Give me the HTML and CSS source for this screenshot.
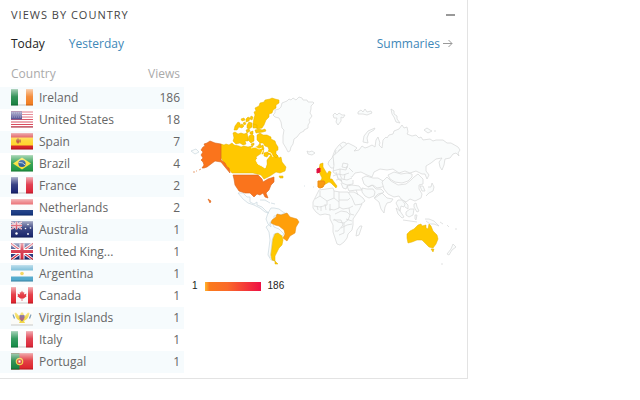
FILE: index.html
```html
<!DOCTYPE html>
<html lang="en">
<head>
    <meta charset="UTF-8">
    <meta name="viewport" content="width=device-width, initial-scale=1.0">
    <title>Views by country</title>
    <link rel="stylesheet" href="styles.css">
</head>
<body>
    <!-- flags, used by the table rows -->
    <svg class="defs" width="0" height="0" aria-hidden="true">
        <defs>
            <linearGradient id="gloss" x1="0" y1="0" x2="0" y2="1">
                <stop offset="0" stop-color="#fff" stop-opacity=".6"/>
                <stop offset=".45" stop-color="#fff" stop-opacity=".15"/>
                <stop offset="1" stop-color="#fff" stop-opacity="0"/>
            </linearGradient>
        </defs>
        <symbol id="shine" viewBox="0 0 22 16"><path fill="url(#gloss)" d="M0 0h22v16H0z"/><path fill="none" stroke="#000" stroke-opacity=".2" d="M0 15.5h22"/></symbol>
        <symbol id="ie" viewBox="0 0 22 16"><path fill="#fafafa" d="M0 0h22v16H0z"/><path fill="#14803f" d="M0 0h7v16H0z"/><path fill="#f27a1c" d="M15 0h7v16h-7z"/></symbol>
        <symbol id="us" viewBox="0 0 22 16"><path fill="#fff" d="M0 0h22v16H0z"/><path stroke="#d84054" stroke-width="1.2" d="M0 .6h22M0 3h22M0 5.5h22M0 8h22M0 10.5h22M0 13h22M0 15.4h22"/><path fill="#3e3b86" d="M0 0h11v8H0z"/><path stroke="#aaa9d0" stroke-dasharray="1 1" stroke-width=".6" d="M1 1.5h9M1.5 3.5h9M1 5.5h9"/></symbol>
        <symbol id="es" viewBox="0 0 22 16"><path fill="#d41a20" d="M0 0h22v16H0z"/><path fill="#ffd21c" d="M0 4h22v8H0z"/><path fill="#b9702c" d="M5 6h1v-1h2v1h2v3H8v1H6V9H5z"/><path fill="#c53a25" d="M6 7h2v2H6z"/></symbol>
        <symbol id="br" viewBox="0 0 22 16"><path fill="#1d9640" d="M0 0h22v16H0z"/><path fill="#f9df2c" d="M11 2l9 6-9 6-9-6z"/><circle cx="11" cy="8" r="3.6" fill="#1c4d92"/><path fill="none" stroke="#d8e5f0" stroke-width=".8" d="M7.8 7q4-.5 6.2 2.4"/></symbol>
        <symbol id="fr" viewBox="0 0 22 16"><path fill="#fafafa" d="M0 0h22v16H0z"/><path fill="#15216f" d="M0 0h7v16H0z"/><path fill="#dc2034" d="M15 0h7v16h-7z"/></symbol>
        <symbol id="nl" viewBox="0 0 22 16"><path fill="#fafafa" d="M0 0h22v16H0z"/><path fill="#e2383f" d="M0 0h22v5H0z"/><path fill="#12347f" d="M0 10.500h22V16H0z"/></symbol>
        <symbol id="jack" viewBox="0 0 22 16"><path fill="#1c2b74" d="M0 0h22v16H0z"/><path stroke="#fff" stroke-width="3" d="M0 0l22 16M22 0L0 16"/><path stroke="#d2243a" stroke-width="1.2" d="M0 0l22 16M22 0L0 16"/><path stroke="#fff" stroke-width="5" d="M11 0v16M0 8h22"/><path stroke="#d2243a" stroke-width="3" d="M11 0v16M0 8h22"/></symbol>
        <symbol id="au" viewBox="0 0 22 16"><path fill="#16246b" d="M0 0h22v16H0z"/><use href="#jack" width="11" height="8"/><g fill="#fff"><circle cx="5.500" cy="12" r="1.200"/><circle cx="17" cy="3" r=".8"/><circle cx="14.500" cy="7" r=".8"/><circle cx="19.500" cy="6.500" r=".8"/><circle cx="17" cy="12.500" r=".9"/></g></symbol>
        <symbol id="ar" viewBox="0 0 22 16"><path fill="#fafafa" d="M0 0h22v16H0z"/><path fill="#4ba6cb" d="M0 0h22v5H0zM0 11h22v5H0z"/><circle cx="11" cy="8" r="1.800" fill="#f1d04a"/></symbol>
        <symbol id="ca" viewBox="0 0 22 16"><path fill="#fafafa" d="M0 0h22v16H0z"/><path fill="#e0202b" d="M0 0h5v16H0zM17 0h5v16h-5zM11 3l1 2 1.300-.6-.3 2.500L15.500 6l-.5 2 .6.800-3 2.200H11.300v2.500h-.6V11H9.400l-3-2.200L7 8l-.5-2L9 6.900l-.3-2.500L10 5z"/></symbol>
        <symbol id="vi" viewBox="0 0 22 16"><path fill="#fbfbf8" d="M0 0h22v16H0z"/><path fill="#f2d53a" d="M8.500 7L5 3 3.500 3.500 4.500 7 6 9.500l3 2-1 2h6l-1-2 3-2 1.500-2.500 1-3.500L17 3l-3.500 4L12 3h-2z"/><path fill="#7a5d8c" d="M8.500 5.500h5v3L11 12 8.500 9z"/><path stroke="#c55" d="M10 8v2.500M12 8v2.500"/><path fill="none" stroke="#5b86a8" stroke-width="1.200" d="M2 5l1.500 4M20 5l-1.500 4"/></symbol>
        <symbol id="it" viewBox="0 0 22 16"><path fill="#fafafa" d="M0 0h22v16H0z"/><path fill="#138a45" d="M0 0h7v16H0z"/><path fill="#dc2435" d="M15 0h7v16h-7z"/></symbol>
        <symbol id="pt" viewBox="0 0 22 16"><path fill="#dd2028" d="M0 0h22v16H0z"/><path fill="#14803c" d="M0 0h8.500v16H0z"/><circle cx="8.500" cy="8" r="3.200" fill="#d63a2c" stroke="#f2d23a" stroke-width="1.200"/><path fill="#fff" d="M7.500 7h2v2h-2z"/></symbol>
    </svg>

    <section class="panel">
        <header class="panel-head">
            <h2>VIEWS BY COUNTRY</h2>
            <button class="collapse" type="button" aria-label="Collapse"></button>
        </header>
        <nav class="tabs">
            <a class="active" href="#">Today</a>
            <a href="#">Yesterday</a>
            <a class="more" href="#">Summaries<svg class="arrow" width="10" height="9" viewBox="0 0 10 9"><path d="M0 4.500h9M5.500 1L9 4.500 5.500 8"/></svg></a>
        </nav>
        <div class="content">
            <table class="countries">
                <thead>
                    <tr><th>Country</th><th class="num">Views</th></tr>
                </thead>
                <tbody>
                    <tr><td><svg class="flag"><use href="#ie"/><use href="#shine"/></svg>Ireland</td><td class="num">186</td></tr>
                    <tr><td><svg class="flag"><use href="#us"/><use href="#shine"/></svg>United States</td><td class="num">18</td></tr>
                    <tr><td><svg class="flag"><use href="#es"/><use href="#shine"/></svg>Spain</td><td class="num">7</td></tr>
                    <tr><td><svg class="flag"><use href="#br"/><use href="#shine"/></svg>Brazil</td><td class="num">4</td></tr>
                    <tr><td><svg class="flag"><use href="#fr"/><use href="#shine"/></svg>France</td><td class="num">2</td></tr>
                    <tr><td><svg class="flag"><use href="#nl"/><use href="#shine"/></svg>Netherlands</td><td class="num">2</td></tr>
                    <tr><td><svg class="flag"><use href="#au"/><use href="#shine"/></svg>Australia</td><td class="num">1</td></tr>
                    <tr><td><svg class="flag"><use href="#jack"/><use href="#shine"/></svg>United King...</td><td class="num">1</td></tr>
                    <tr><td><svg class="flag"><use href="#ar"/><use href="#shine"/></svg>Argentina</td><td class="num">1</td></tr>
                    <tr><td><svg class="flag"><use href="#ca"/><use href="#shine"/></svg>Canada</td><td class="num">1</td></tr>
                    <tr><td><svg class="flag"><use href="#vi"/><use href="#shine"/></svg>Virgin Islands</td><td class="num">1</td></tr>
                    <tr><td><svg class="flag"><use href="#it"/><use href="#shine"/></svg>Italy</td><td class="num">1</td></tr>
                    <tr><td><svg class="flag"><use href="#pt"/><use href="#shine"/></svg>Portugal</td><td class="num">1</td></tr>
                </tbody>
            </table>
            <div class="map">
                <svg class="world" viewBox="184 90 283 180" role="img" aria-label="World map of views">
                    <g class="land">
                        <!-- greenland, iceland -->
                        <path d="M273 115l2-2 0-3 4-1 2-2 1-4 5-2 2-2 2 1 2-2 3 2 3-3 3 1 1 2 4 0 1 2 5 0 1 1-3 3 0 3-1 4 2 3-3 4 1 2-2 3 0 3-4 2 0 1-4 2-3 4-3 2-1 5-2 3-1 4-2 1-2-4-3-5 0-7 1-6-2-2-1-6-2-4-4-1z"/>
                        <path d="M307 151l2 1 3-1 3 2-3 2-4-1z"/>
                        <!-- arctic islands -->
                        <path d="M333 115l2-2 2 2 2-2 3 2 3 0-2 3-2-1 0 4-3 4-2-3 1-4-3 0zM358 112l3-2 2 2 2-3 2 3 4-1 1 2-5 2-4-1-5 0zM391 109l3 2 0 3 3 2 0 3 3 4-4-1-2-5-2-3zM363 142l1-6 4-5 7-3-1 2-5 3-2 5 1 5zM424 130l3-2 3 2 2 1-4 2zM434 131l2 0"/>
                        <!-- scandinavia -->
                        <path d="M331 168l-3-4 1-3 3-3 3-8 4-5 4-3 3 1 1 4 0 6-3 6-4 1 0-4 3-5 0-3-4 2-2 6 1 5-2 6-3 1zM336 150l-2 9 0 6M340 145l3 4"/>
                        <!-- russia -->
                        <path d="M348 143l6 3 3 2-3 3 5-1 3-4 3 2 3-1 4-2 3 2 1-7 2-3 2 6-1 2 3 3 1-8 3-3 1 1 2-3 4-1 1-3 5-2 3-4 2 3 3-1 1 5-1 2 5 2 4-1 3 3 2-1 2 3 7-1 3 2 3-1 7 0 4 3 4 0 7 4 2 3-2 3 1 3-3-3-3 1-3 4-5 1-1 6-2 5-2-3-1-5 3-4-6 1-5 4-5 3 0 5 3 4-2 4-2-5-3 0-6-3-6 2-5-2-6 2-6-4-6 1-7-1-6 3-2 5-5-2-6-3-6 1-3 4-5 1 2 5-5 0-6-4-1-4-4-3 1-7-1-9z"/>
                        <!-- europe -->
                        <path d="M333 171l7-2 6 1 1-4M333 176l5-2 5 1 6-2M340 169l0 6 2 4 5 1 5-2M336 180l5-1 1 4 5 2 6-1 0-4M341 183l2 5 3 1 2-4M347 186l5-1 7 1 3 4-6 0-7 1zM343 163l5 1-1 4-5-1zM336 172l2 6 4 3M345 174l-1 6M349 168l4 4"/>
                        <!-- central asia, middle east -->
                        <path d="M362 178l4-2 7 2 5 0 5 3 3 4-4 2-5 1-4-3-5 2-4-3zM362 188l5 1 6 0 2 3-1 4-5 2-4-2-3-4zM368 187l4-2 4 4 5 0 3 3-5 3-4 3M349 192l5 0 5 3 4 3 2 3-5 4-6 2-3-5-3-6zM356 190l2 5M374 198l4-4 4-1 5 5 6 1-2 3-4 1-2 4-1 6-3-4-2-7z"/>
                        <!-- mongolia, china -->
                        <path d="M388 175l6-3 7 2 6-1 5 1 0 3-4 4-6 2-7-1-5-3zM382 182l5-5 4 4 7 4 8-1 5-4 3-3 4-3 5 5 0 5-4 1 0 4 3 5-1 4-6 3-5-2-4 3-5-3-2-3-5 1-6-3-4-5z"/>
                        <!-- south east asia, japan -->
                        <path d="M398 200l4 0 3 4-1 3-3-1-1 5-2-4-2-4zM404 201l4 4 0 4-3-2M414 204l2-1 1 4 2 4-2 1-3-5zM396 208l4 3 4 6-2 1-4-4zM406 212l4-3 4 0-1 6-4 2-3-2zM403 220l7 1 7 1M415 215l2 0-1 5-1-1zM425 219l4 0 5 2 5 5-5-2-4 0-4-3M428 187l3 0 1-4 2 4-1 4-4 2-3 3M420 186l3 0 2 5-3 0z"/>
                        <path d="M453 244l3 3-4 3-3 5-2-1 4-5zM447 225l2 2M455 229l2 0M440 222l3 2M441 264l2 0"/>
                        <!-- africa -->
                        <path d="M319 190l7-1 7-1 1 3 6 1 8 0 4 6 3 7 7-1-3 6-6 9 0 6-1 5-4 4-1 4-3 4-4 3-3-1-2-6-2-6 0-7-3-6 0-4-5-1-5 1-4-3-3-4 0-6 3-6z"/>
                        <path d="M320 191l0 5-5 3M320 196l7 5 0 4-7 2-6-1M327 201l7-3 0-7M334 198l5 4 0 6-5 2-5-1M339 202l0-10M339 200l9 0 2-2M339 207l4 2 6-1 4-2M349 208l1 6 4 1M335 214l6-3 6 1 3 3-2 5-4 3-6-1-4-3M333 220l8 0 2 5-5 6-3 0M341 228l6-3 5-1M344 223l0 10-5 2M346 219l6 2M317 206l1 4M321 206l0 5M325 204l1 6M330 204l0 7"/>
                        <path d="M360 226l2 0-3 9-3 1 1-6z"/>
                        <!-- mexico, central and south america -->
                        <path class="soft" d="M238 193l5 0 4 4 3 0 0 5 4 2 3-2 0 3 5 2 4 4 3 2-4-1-5-4-6-3-6-2-5-4zM260 200l5 0 5 3M271 203l4 1M268 213l3-5 3 0 5 1 4 3 4 2-4 0-4 1-5 1 0 4-4 2 1 5-3-3-2-5zM272 222l2 5 5 2 5 5-3 3-4-4-3 1-2 7-1 10-1 6 5 4-4-1-3-5 2-15-1-8-3-5z"/>
                        <path class="soft" d="M191 151l5-2 3 3-4 2zM313 187l1 0M304 186l1 0"/>
                    </g>
                    <!-- canada mainland -->
                    <path class="v1" d="M221 144l3 1 2-1 3 1 3-2 2 2 5 1 2 1 3-1 4 1 4-1 2 2 4-2 2-3 1 3 2-1 1 4-1 5-3 0-4 3 2 5 5 3 2 4 2-4 0-5 4-5 3-2 3 2 2 3 2-1 1 5 4 5-1 4-5 2-4-1-6 4-6 3-3-4-8-2H232l-5-6-6-9z"/>
                    <!-- ellesmere and axel heiberg -->
                    <path class="v1" d="M254 118l1-3-1-3 2-1-1-3 4-2 1-3 4-1 1-2 5-1 2-1 3 1 4 1 0 3-3 2 0 3-3 2-1 3-3 1 0 3-3 3-2 5-2 3-5 1-1-3-3-2z"/>
                    <!-- archipelago -->
                    <path class="v1" d="M235 126l3-4 2 1 0 2 2-1 2 2-2 2-3-1-2 3-3 0zM241 119l3-1 1 2-3 1zM246 119l2-2 2 1-1 3-3 1zM251 116l2 1-1 3-2-1zM243 123l2-1 1 2-2 1zM247 125l2-3 3 1 0 4-3 2-2-1zM246 130l3-1 1 2-3 2zM253 124l4 1 0 3-4 0zM255 130l4-1 3 1 3-1 1 2-3 1-7 1zM250 132l3-1 0 3-3 0z"/>
                    <path class="v1" d="M233 133l2-1 3 2 3-1 3 1 3-1 1 4 0 4-3 0 1 3-3 1-3-2-4 1-3-3 1-3zM249 136l3-2 2 2 0 5-3 2-3-3zM251 144l3-1 0 2-2 1z"/>
                    <!-- baffin -->
                    <path class="v1" d="M257 135l3-2 3 2 4 0 4 2 0 2 4 2 1 3 2 3 0 3-2 1 0 3 2 2-2 2-3-3-3 0-3-3 2-2-1-3-3-1-2-3-3 0-3-3zM264 153l3-1 2 2-2 3-3-1zM279 176l4 0 0 2-3 0z"/>
                    <path class="cut" d="M256 160l4-3 4 2 2 4-1 5-3-2-4-2z"/>
                    <path class="gap" d="M264 149l4 3 3 1 2 4M251 148l4-1 4 2 3-1M263 150l-2 4 2 4"/>
                    <!-- united states -->
                    <path class="v18" d="M203 147L205 146 204 144 207 143 210 141 215 143 221 144V160L225 163 227 167 229 168 230 173 225 167 221 162 215 161 211 164 207 167 204 168 202 168 204 165 203 162 201 160 203 158 201 155 203 152 201 150z"/>
                    <path class="v18" d="M233 175h25l4 4 1 3 5-3 6-2 0 5-3 3-2 5-3 3 2 5-3-1-2-4-3 2-3-1-3 3-4-4-5 0-6-2-4-6-1-6zM208 199l3 2-1 2z"/>
                    <path class="v18" d="M199 170l2-1M193 172l2 0M196 171l1 0"/>
                    <!-- brazil, argentina -->
                    <path class="v4" d="M272 220l4-3 1-3 4 1 6-2 3 4 7 2 2 3-3 5-1 6-5 3-3 5-4-3 2-4-1-4-5-4-4-1-4-2z"/>
                    <path class="v1" d="M275 234l3-1 4 3 1 4-1 5-3 3-2 4-2 4 0 5-3-1-1-5 1-8 1-8zM275 261l3 3-3 0z"/>
                    <!-- australia -->
                    <path class="v1" d="M407 234l3-3 4-2 4-4 3-1 1 2 4-1 0 3 2 1 1-5 2 2 2 5 4 4 1 4-2 5-3 4-4-1-3-3-4-4-5 0-5 2-4 1-1-5zM431 249l3 0-1 3z"/>
                    <!-- western europe -->
                    <path class="v1" d="M320 164l3-1 0 4 3 5 1 2 2-3 2 1-1 5 0 2 2 0 2 3 3 4-1 2-2-2-3-3-2-1-5 3-4-3 2-4-2-4-1-5z"/>
                    <path class="v7" d="M318 181l6 0 1 2-2 4-3 1-2-1z"/>
                    <path class="v186" d="M317 169l3-1 0 4-3 1z"/>
                </svg>
                <div class="legend"><span>1</span><i class="scale"></i><span>186</span></div>
            </div>
        </div>
    </section>
</body>
</html>
```
FILE: styles.css
```css
*{
    box-sizing: border-box;
}
body{
    margin: 0;
    background: #fff;
    color: #666;
    font: 12px/22px "Open Sans", "Noto Sans", sans-serif;
}
.defs{
    position: absolute;
}
a{
    color: #4088b8;
    text-decoration: none;
}
.panel{
    max-width: 468px;
    padding-bottom: 5px;
    border-right: 1px solid #e3e3e3;
    border-bottom: 1px solid #e3e3e3;
}
.panel-head{
    display: flex;
    align-items: center;
    justify-content: space-between;
    height: 30px;
    padding: 0 12px 0 11px;
}
.panel-head h2{
    margin: 0;
    color: #444;
    font-size: 11px;
    font-weight: normal;
    letter-spacing: 1px;
}
.collapse{
    width: 9px;
    height: 2px;
    padding: 0;
    border: 0;
    background: #999;
}
.tabs{
    display: flex;
    gap: 24px;
    height: 35px;
    padding: 3px 14px 0 11px;
}
.tabs .active{
    color: #222;
}
.tabs .more{
    margin-left: auto;
}
.arrow{
    margin-left: 3px;
    fill: none;
    stroke: #999;
}
.content{
    display: flex;
}

/* table */
.countries{
    flex: none;
    width: 184px;
    border-collapse: collapse;
}
.countries th,
.countries td{
    height: 22px;
    padding: 0 0 0 11px;
    text-align: left;
    white-space: nowrap;
}
.countries th{
    color: #aaa;
    font-weight: normal;
    line-height: 18px;
    vertical-align: top;
}
.countries .num{
    padding: 0 4px 0 0;
    text-align: right;
}
.countries tbody tr:nth-child(odd){
    background: #f6fbfd;
}
.flag{
    width: 22px;
    height: 17px;
    margin: 0 6px 3px 0;
    vertical-align: middle;
}

/* map */
.map{
    flex: 1;
    padding-top: 25px;
}
.world{
    display: block;
    width: 100%;
}
.land{
    fill: #fafcfc;
    stroke: #d9dadb;
    stroke-width: .8;
}
.land .soft{
    stroke: #cfdce2;
}
.v1{
    fill: #ffc800;
    stroke: #e3b000;
    stroke-width: .5;
}
.v4{
    fill: #ff9f0a;
    stroke: #e08a10;
    stroke-width: .5;
}
.v7{
    fill: #f99a12;
    stroke: #ee8c12;
}
.v18{
    fill: #fa741c;
    stroke: #d9641c;
    stroke-width: .6;
}
.v186{
    fill: #e01040;
    stroke: #e01040;
}
.cut{
    fill: #fff;
    stroke: #fff;
}
.gap{
    fill: none;
    stroke: #fff;
    stroke-width: .8;
}
.legend{
    display: flex;
    align-items: center;
    gap: 7px;
    padding: 10px 0 0 8px;
    color: #222;
    font: 10px/12px "Liberation Sans", Arial, sans-serif;
}
.scale{
    width: 56px;
    height: 9px;
    background: linear-gradient(to right, #ffb52e, #fb7a1c 8%, #fa6a2a 40%, #ee1045);
}
```
